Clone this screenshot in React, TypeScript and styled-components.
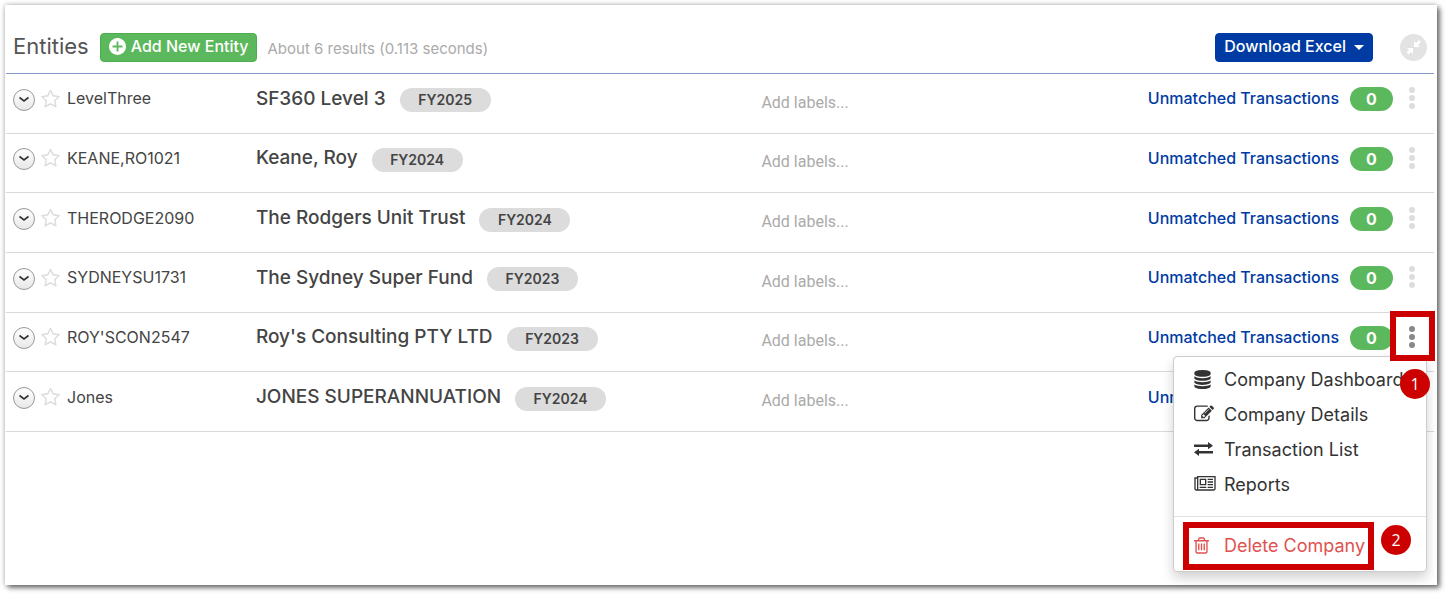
import React from "react";
import styled, { createGlobalStyle, css } from "styled-components";

const GlobalStyle = createGlobalStyle`
  * { box-sizing: border-box; }
  body {
    margin: 0;
    background: #fff;
    color: #444;
    font-family: Inter, "Liberation Sans", sans-serif;
    font-size: 16px;
  }
  button { font: inherit; cursor: pointer; }
`;

const Page = styled.div`
  display: flex;
  flex-direction: column;
  min-height: 100vh;
  padding: 5px 9px 9px 5px;
`;

const Panel = styled.main`
  flex: 1;
  padding: 0 3px 0 1px;
  background: #fff;
  box-shadow: 0 0 5px rgba(0, 0, 0, 0.3), 3px 3px 5px rgba(0, 0, 0, 0.5);
`;

const Header = styled.header`
  display: flex;
  align-items: center;
  height: 69px;
  padding: 16px 7px 0;
  border-bottom: 1px solid #7f9ac9;
`;

const Title = styled.h1`
  margin: 0 11px 0 0;
  padding-bottom: 2px;
  color: #555;
  font-size: 22px;
  font-weight: 400;
  line-height: 28px;
`;

const HeaderButton = styled.button<{ $tone: "green" | "blue" }>`
  display: flex;
  align-items: center;
  height: 29px;
  padding: 0 8px 2px;
  border: 1px solid ${(p) => (p.$tone === "green" ? "#4cae4c" : "#003ba3")};
  border-radius: 4px;
  background: ${(p) => (p.$tone === "green" ? "#5cb85c" : "#003ba3")};
  color: #fff;
  font-size: 16px;
  font-weight: 500;
  white-space: nowrap;
`;

const PlusIcon = styled.svg`
  width: 17px;
  height: 17px;
  margin-right: 5px;
  fill: currentColor;
`;

const Caret = styled.span`
  margin: 2px 0 0 8px;
  border: 5px solid transparent;
  border-top-color: #fff;
  border-bottom: 0;
`;

const ResultCount = styled.p`
  flex: 1;
  margin: 0 10px;
  padding-top: 3px;
  color: #aaa;
  font-size: 15px;
`;

const CollapseButton = styled.button`
  display: flex;
  width: 27px;
  height: 27px;
  margin-left: 27px;
  padding: 0;
  border: 0;
  border-radius: 50%;
  background: #e3e3e3;
`;

const EntityTable = styled.table`
  width: 100%;
  height: 358px;
  border-collapse: separate;
  border-spacing: 0;
  table-layout: fixed;
`;

const Cell = styled.td`
  padding: 0 0 10px;
  border-bottom: 1px solid #d9d9d9;
  vertical-align: middle;
  white-space: nowrap;
`;

const CellRow = styled.div<{ $end?: boolean }>`
  display: flex;
  align-items: center;
  height: 30px;
  ${(p) =>
    p.$end
      ? css`
          justify-content: flex-end;
        `
      : css`
          padding-left: 7px;
        `}
`;

const ExpandButton = styled.button`
  display: flex;
  width: 22px;
  height: 22px;
  margin: 3px 6px 0 0;
  padding: 0;
  border: 1px solid #999;
  border-radius: 50%;
  background: linear-gradient(#fff, #e8e8e8);
`;

const StarButton = styled.button`
  display: flex;
  width: 19px;
  height: 19px;
  margin: 2px 7px 0 0;
  padding: 0;
  border: 0;
  background: none;
  color: #ddd;
`;

const NameGroup = styled.div`
  display: flex;
  align-items: center;
  height: 30px;
`;

const EntityName = styled.span`
  color: #444;
  font-size: 19px;
  font-weight: 500;
`;

const YearBadge = styled.span`
  min-width: 91px;
  margin: 4px 0 0 14px;
  border-radius: 12px;
  background: #dcdcdc;
  font-size: 14px;
  font-weight: 600;
  line-height: 24px;
  text-align: center;
`;

const LabelInput = styled.input`
  display: block;
  width: 200px;
  height: 24px;
  margin-top: 8px;
  padding: 0;
  border: 0;
  background: none;
  font: 16px Roboto, sans-serif;
  &::placeholder {
    color: #aaa;
    opacity: 1;
  }
`;

const MatchLink = styled.a`
  color: #003ba3;
  font-size: 16px;
  font-weight: 500;
  text-decoration: none;
`;

const CountBadge = styled.span`
  width: 43px;
  margin: 2px 9px 0 11px;
  border-radius: 12px;
  background: #5cb85c;
  color: #fff;
  font-size: 16px;
  font-weight: 700;
  line-height: 24px;
  text-align: center;
`;

const MenuAnchor = styled.div`
  position: relative;
  margin-right: 12px;
`;

const DotsButton = styled.button<{ $open: boolean }>`
  display: flex;
  width: 20px;
  height: 22px;
  padding: 0;
  border: 0;
  background: none;
  color: ${(p) => (p.$open ? "#888" : "#ddd")};
`;

const Menu = styled.div`
  position: absolute;
  z-index: 2;
  top: 30px;
  right: -5px;
  width: 254px;
  padding: 5px 0 8px;
  border: 1px solid #ccc;
  border-radius: 4px;
  background: #fff;
  box-shadow: 0 6px 12px rgba(0, 0, 0, 0.18);
`;

const MenuItem = styled.button<{ $danger?: boolean }>`
  display: flex;
  align-items: center;
  width: 100%;
  height: 35px;
  padding: 0 0 0 20px;
  border: 0;
  background: none;
  color: ${(p) => (p.$danger ? "#e0524f" : "#333")};
  font-size: 18px;
  text-align: left;
`;

const IconSlot = styled.span`
  display: flex;
  width: 30px;
`;

const Divider = styled.hr`
  margin: 14px 0 11px;
  border: 0;
  border-top: 1px solid #e0e0e0;
`;

const Highlight = styled.span<{ $area: "dots" | "delete" }>`
  position: absolute;
  z-index: 3;
  border: 6px solid #c00;
  pointer-events: none;
  ${(p) =>
    p.$area === "dots"
      ? css`
          top: -15px;
          left: -12px;
          width: 45px;
          height: 50px;
        `
      : css`
          bottom: 1px;
          left: 9px;
          width: 191px;
          height: 48px;
        `}
`;

const StepMarker = styled.span<{ $step: 1 | 2 }>`
  position: absolute;
  z-index: 4;
  top: ${(p) => (p.$step === 1 ? 12 : 168)}px;
  right: ${(p) => (p.$step === 1 ? -4 : 15)}px;
  width: 30px;
  border-radius: 50%;
  background: #c00;
  color: #fff;
  font-family: "Open Sans", sans-serif;
  font-size: 16px;
  line-height: 30px;
  text-align: center;
`;

type GlyphProps = { path: string; box?: string; width?: number; height?: number };

const Glyph = ({ path, box = "0 0 1792 1792", width = 20, height = 20 }: GlyphProps) => (
  <svg viewBox={box} width={width} height={height} fill="currentColor" aria-hidden="true">
    <path d={path} />
  </svg>
);

const paths = {
  plus: "M1344 960v-128q0-20-20-20h-344v-344q0-20-20-20h-128q-20 0-20 20v344h-344q-20 0-20 20v128q0 20 20 20h344v344q0 20 20 20h128q20 0 20-20v-344h344q20 0 20-20zm320-64q0 209-103 385.5t-279.5 279.5-385.5 103-385.5-103-279.5-279.5-103-385.5 103-385.5 279.5-279.5 385.5-103 385.5 103 279.5 279.5 103 385.5z",
  star: "M1201 1004l306-297-422-62-189-382-189 382-422 62 306 297-73 421 378-199 377 199zm527-357q0 22-26 48l-363 354 86 500q1 7 1 20 0 50-41 50-19 0-40-12l-449-236-449 236q-22 12-40 12-21 0-31.5-14.5t-10.5-35.5q0-6 2-20l86-500-364-354q-25-27-25-48 0-37 56-46l502-73 225-455q19-41 49-41t49 41l225 455 502 73q56 9 56 46z",
  database:
    "M896 768q237 0 443-43t325-127v170q0 69-103 128t-280 93.5-385 34.5-385-34.5-280-93.5-103-128v-170q119 84 325 127t443 43zm0 768q237 0 443-43t325-127v170q0 69-103 128t-280 93.5-385 34.5-385-34.5-280-93.5-103-128v-170q119 84 325 127t443 43zm0-384q237 0 443-43t325-127v170q0 69-103 128t-280 93.5-385 34.5-385-34.5-280-93.5-103-128v-170q119 84 325 127t443 43zm0-1152q208 0 385 34.5t280 93.5 103 128v128q0 69-103 128t-280 93.5-385 34.5-385-34.5-280-93.5-103-128v-128q0-69 103-128t280-93.5 385-34.5z",
  edit: "M888 1184l116-116-152-152-116 116v56h96v96h56zm440-720q-16-16-33 1l-350 350q-17 17-1 33t33-1l350-350q17-17 1-33zm80 594v190q0 119-84.5 203.5t-203.5 84.5h-832q-119 0-203.5-84.5t-84.5-203.5v-832q0-119 84.5-203.5t203.5-84.5h832q63 0 117 25 15 7 18 23 3 17-9 29l-49 49q-14 14-32 8-23-6-45-6h-832q-66 0-113 47t-47 113v832q0 66 47 113t113 47h832q66 0 113-47t47-113v-126q0-13 9-22l64-64q15-15 35-7t20 29zm-96-738l288 288-672 672h-288v-288zm444 132l-92 92-288-288 92-92q28-28 68-28t68 28l152 152q28 28 28 68t-28 68z",
  exchange: "M0 2.4H14V0L19 3.7L14 7.2V5H0ZM19 8.9V11.5H5V14L0 10.3L5 6.8V8.9Z",
  news: "M1024 512h-384v384h384v-384zm128 640v128h-640v-128h640zm0-768v640h-640v-640h640zm640 768v128h-512v-128h512zm0-256v128h-512v-128h512zm0-256v128h-512v-128h512zm0-256v128h-512v-128h512zm-1536 960v-960h-128v960q0 26 19 45t45 19 45-19 19-45zm1664 0v-1088h-1536v1088q0 33-11 64h1483q26 0 45-19t19-45zm128-1216v1216q0 80-56 136t-136 56h-1664q-80 0-136-56t-56-136v-1088h256v-128h1792z",
  trash:
    "M704 736v576q0 14-9 23t-23 9h-64q-14 0-23-9t-9-23v-576q0-14 9-23t23-9h64q14 0 23 9t9 23zm256 0v576q0 14-9 23t-23 9h-64q-14 0-23-9t-9-23v-576q0-14 9-23t23-9h64q14 0 23 9t9 23zm256 0v576q0 14-9 23t-23 9h-64q-14 0-23-9t-9-23v-576q0-14 9-23t23-9h64q14 0 23 9t9 23zm128 724v-948h-896v948q0 22 7 40.5t14.5 27 10.5 8.5h832q3 0 10.5-8.5t14.5-27 7-40.5zm-672-1076h448l-48-117q-7-9-17-11h-317q-10 2-17 11zm928 32v64q0 14-9 23t-23 9h-96v948q0 83-47 143.5t-113 60.5h-832q-66 0-113-58.5t-47-141.5v-952h-96q-14 0-23-9t-9-23v-64q0-14 9-23t23-9h309l70-167q15-37 54-63t79-26h320q40 0 79 26t54 63l70 167h309q14 0 23 9t9 23z",
};

const entities = [
  { code: "LevelThree", name: "SF360 Level 3", year: "FY2025" },
  { code: "KEANE,RO1021", name: "Keane, Roy", year: "FY2024" },
  { code: "THERODGE2090", name: "The Rodgers Unit Trust", year: "FY2024" },
  { code: "SYDNEYSU1731", name: "The Sydney Super Fund", year: "FY2023" },
  { code: "ROY'SCON2547", name: "Roy's Consulting PTY LTD", year: "FY2023", open: true },
  { code: "Jones", name: "JONES SUPERANNUATION", year: "FY2024" },
];

const CompanyMenu = () => (
  <Menu>
    <MenuItem>
      <IconSlot><Glyph path={paths.database} box="128 0 1536 1792" width={17} height={19} /></IconSlot>
      Company Dashboard
    </MenuItem>
    <MenuItem>
      <IconSlot><Glyph path={paths.edit} /></IconSlot>
      Company Details
    </MenuItem>
    <MenuItem>
      <IconSlot><Glyph path={paths.exchange} box="0 0 19 14" width={19} height={14} /></IconSlot>
      Transaction List
    </MenuItem>
    <MenuItem>
      <IconSlot><Glyph path={paths.news} box="0 128 2048 1536" width={22} height={16} /></IconSlot>
      Reports
    </MenuItem>
    <Divider />
    <MenuItem $danger>
      <IconSlot><Glyph path={paths.trash} box="192 128 1408 1536" width={15} height={17} /></IconSlot>
      Delete Company
    </MenuItem>
    <Highlight $area="delete" />
    <StepMarker $step={1}>1</StepMarker>
    <StepMarker $step={2}>2</StepMarker>
  </Menu>
);

export default function App() {
  return (
    <Page>
      <GlobalStyle />
      <Panel>
        <Header>
          <Title>Entities</Title>
          <HeaderButton $tone="green">
            <PlusIcon viewBox="128 128 1536 1536" aria-hidden="true">
              <path d={paths.plus} />
            </PlusIcon>
            Add New Entity
          </HeaderButton>
          <ResultCount>About 6 results (0.113 seconds)</ResultCount>
          <HeaderButton $tone="blue">
            Download Excel
            <Caret />
          </HeaderButton>
          <CollapseButton aria-label="Collapse">
            <svg viewBox="0 0 27 27" width="27" height="27" fill="#fff" aria-hidden="true">
              <path d="M14 13V7L16 9L19 6L21 8L18 11L20 13ZM13 14V20L11 18L8.5 20.5L6.5 18.5L9 16L7 14Z" />
            </svg>
          </CollapseButton>
        </Header>
        <EntityTable aria-label="Entities">
          <colgroup>
            <col style={{ width: "17.5%" }} />
            <col style={{ width: "35.4%" }} />
            <col />
            <col style={{ width: "24%" }} />
          </colgroup>
          <tbody>
            {entities.map((e) => (
              <tr key={e.code}>
                <Cell>
                  <CellRow>
                    <ExpandButton aria-label={`Expand ${e.name}`}>
                      <svg viewBox="0 0 20 20" width="20" height="20" fill="none" stroke="#333" strokeWidth="1.6" aria-hidden="true">
                        <path d="M5.5 7.5L10 11L14.5 7.5" />
                      </svg>
                    </ExpandButton>
                    <StarButton aria-label={`Favourite ${e.name}`}>
                      <Glyph path={paths.star} box="64 80 1664 1664" width={19} height={19} />
                    </StarButton>
                    {e.code}
                  </CellRow>
                </Cell>
                <Cell>
                  <NameGroup>
                    <EntityName>{e.name}</EntityName>
                    <YearBadge>{e.year}</YearBadge>
                  </NameGroup>
                </Cell>
                <Cell>
                  <LabelInput aria-label={`Labels for ${e.name}`} placeholder="Add labels..." />
                </Cell>
                <Cell>
                  <CellRow $end>
                    <MatchLink href="#unmatched">Unmatched Transactions</MatchLink>
                    <CountBadge>0</CountBadge>
                    <MenuAnchor>
                      <DotsButton $open={!!e.open} aria-label={`Actions for ${e.name}`}>
                        <svg viewBox="0 0 20 22" width="20" height="22" fill="currentColor" aria-hidden="true">
                          <circle cx="10" cy="3" r="3" />
                          <circle cx="10" cy="11" r="3" />
                          <circle cx="10" cy="19" r="3" />
                        </svg>
                      </DotsButton>
                      {e.open && <CompanyMenu />}
                      {e.open && <Highlight $area="dots" />}
                    </MenuAnchor>
                  </CellRow>
                </Cell>
              </tr>
            ))}
          </tbody>
        </EntityTable>
      </Panel>
    </Page>
  );
}
